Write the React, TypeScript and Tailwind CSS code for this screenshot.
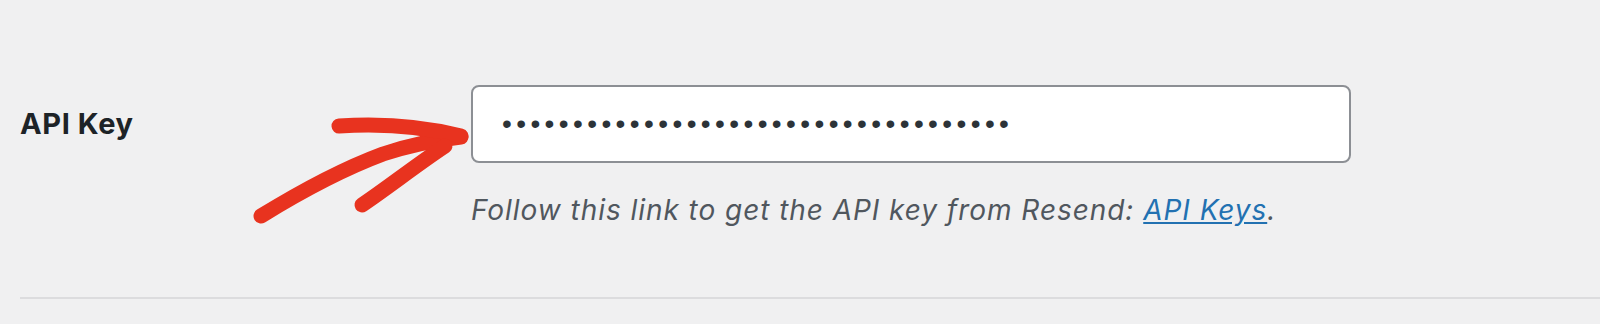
import React from 'react';

const UI_FONT = { fontFamily: 'Inter, "Liberation Sans", Arial, sans-serif' };

function Arrow() {
  return (
    <svg
      className="pointer-events-none absolute left-0 top-0"
      width="480"
      height="240"
      viewBox="0 0 480 240"
      fill="none"
    >
      <g stroke="#e8331f" strokeWidth="15" strokeLinecap="round" strokeLinejoin="round">
        <path d="M261 216 C 300 192, 340 170, 383 154 C 410 145, 435 140, 461 137" />
        <path d="M339 126 C 385 123, 425 127, 461 136" />
        <path d="M362 205 C 390 186, 415 166, 445 146" />
      </g>
    </svg>
  );
}

export default function App() {
  return (
    <div className="relative h-[324px] w-full overflow-hidden bg-[#f0f0f1]" style={UI_FONT}>
      <Arrow />
      <div className="flex pl-[20px] pt-[85px]">
        <div className="w-[451px] shrink-0 pt-[22px] text-[29px] font-bold leading-[34px] tracking-[0.6px] text-[#1d2327]">
          API Key
        </div>
        <div className="flex flex-col">
          <div className="flex h-[78px] w-[880px] items-center rounded-[8px] border-2 border-[#8c8f94] bg-white pl-[29px]">
            <span
              className="text-[28px] leading-none tracking-[4.4px] text-[#2c3338]"
              style={{ fontFamily: '"Liberation Sans", Arial, sans-serif' }}
            >
              {'•'.repeat(36)}
            </span>
          </div>
          <p className="mt-[30px] text-[28px] italic leading-[34px] tracking-[0.95px] text-[#50575e]">
            Follow this link to get the API key from Resend:{' '}
            <a href="#" className="text-[#2271b1] underline">
              API Keys
            </a>
            .
          </p>
        </div>
      </div>
      <div className="ml-[20px] mt-[70px] border-t-2 border-[#dcdcde]" />
    </div>
  );
}
